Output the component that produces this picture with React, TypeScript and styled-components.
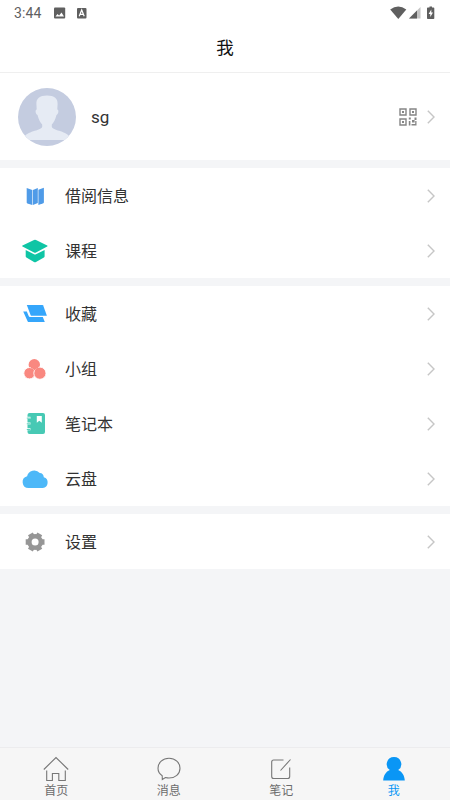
import React from 'react';
import styled, { createGlobalStyle } from 'styled-components';

const GlobalStyle = createGlobalStyle`
  * { box-sizing: border-box; }
  body { margin: 0; background: #f4f5f7; }
`;

const Screen = styled.div`
  width: 450px;
  height: 800px;
  display: flex;
  flex-direction: column;
  overflow: hidden;
  background: #f4f5f7;
  color: #333;
  font-family: Roboto, 'Noto Sans CJK SC', sans-serif;
`;

const StatusBar = styled.div`
  height: 25px;
  flex: none;
  display: flex;
  align-items: center;
  justify-content: space-between;
  padding: 0 13px 0 14px;
  background: #fff;
  color: #5f5f5f;
`;

const StatusLeft = styled.div`
  display: flex;
  align-items: center;
`;

const Clock = styled.span`
  width: 40px;
  font-size: 14px;
  line-height: 25px;
  letter-spacing: 0.1px;
  padding-top: 1px;
`;

const TitleBar = styled.header`
  height: 48px;
  flex: none;
  display: flex;
  align-items: center;
  justify-content: center;
  padding-bottom: 4px;
  background: #fff;
  border-bottom: 1px solid #efefef;
  color: #111;
  font-size: 17.5px;
`;

const Profile = styled.section`
  height: 87px;
  flex: none;
  display: flex;
  align-items: center;
  padding: 0 14px 0 18px;
  background: #fff;
`;

const UserName = styled.span`
  flex: 1;
  padding-left: 15px;
  font-size: 17px;
`;

const Group = styled.section`
  flex: none;
  margin-top: 8px;
  background: #fff;
`;

const Row = styled.div`
  height: 55px;
  display: flex;
  align-items: center;
  padding: 0 14px 0 17px;
`;

const RowLabel = styled.span`
  flex: 1;
  padding: 2px 0 0 12px;
  font-size: 16px;
  line-height: 24px;
`;

const TabBar = styled.nav`
  height: 53px;
  flex: none;
  margin-top: auto;
  display: flex;
  background: #f6f6f6;
  border-top: 1px solid #ececee;
`;

const Tab = styled.div<{ $active?: boolean }>`
  flex: 1;
  display: flex;
  flex-direction: column;
  align-items: center;
  padding-top: 7px;
  font-size: 12px;
  line-height: 14px;
  color: ${(p) => (p.$active ? '#0a96f5' : '#6c6c6c')};
`;

const TabLabel = styled.span`
  margin-top: 2px;
`;

const Chevron = () => (
  <svg width="10" height="16" viewBox="0 0 10 16" fill="none" stroke="#c6c6c6" strokeWidth="1.4">
    <path d="M1.800 1.800 8 8l-6.200 6.200" />
  </svg>
);

const RowSvg = ({ children }: { children: React.ReactNode }) => (
  <svg width="36" height="37" viewBox="0 0 36 37">{children}</svg>
);

const icons = {
  book: (
    <RowSvg>
      <g fill="#4f9be8">
        <path d="M9.700 11 15.300 13v15l-4.900-1.600q-.7-.3-.7-1z" />
        <path d="M15.900 13 20.800 11v15l-4.900 2z" />
        <path d="M21.400 12.800 26.900 10.800v14.400q0 .8-.7 1.100l-4.800 1.700z" />
      </g>
    </RowSvg>
  ),
  course: (
    <RowSvg>
      <g fill="#0fc5a5">
        <path d="M17 8.100q1-.5 2 0l11.200 5.400q.9.500 0 1L19 20.600q-1 .5-2 0L5.500 14.500q-.9-.5 0-1z" />
        <path d="M8.700 18 17 22.200q1 .5 2 0l8.600-4.200v6.200q0 .8-.7 1.200L19 29.900q-1 .5-2 0l-7.600-4.500q-.7-.4-.7-1.200z" />
      </g>
    </RowSvg>
  ),
  collect: (
    <RowSvg>
      <g fill="#35a6fb">
        <path d="M9.800 10h15.700q.5 0 .7.500l3.700 10.300H14.500q-.6 0-.8-.5z" />
        <path d="M6.200 16.500h3.600l2 4.700q.3.800 1.100.8h12.900l2 5H11.700q-.7 0-1-.6z" />
      </g>
    </RowSvg>
  ),
  group: (
    <RowSvg>
      <g fill="#f98880">
        <circle cx="17.300" cy="14.800" r="5.700" />
        <circle cx="12.500" cy="23.200" r="5.700" stroke="#fff" strokeWidth="0.900" />
        <circle cx="22.900" cy="23.200" r="6.100" stroke="#fff" strokeWidth="0.900" />
        <path d="M13 15.500h8.800l-.6 2.500q-2.400.6-3.700 2.600-1.300-1.800-3.500-2.600z" />
      </g>
    </RowSvg>
  ),
  notebook: (
    <RowSvg>
      <path
        fill="#47c9b4"
        d="M12.500 8H26q2 0 2 2v17q0 2-2 2H12.500q-2 0-2-2v-1.800h3v-2h-3v-3.700h3v-2h-3v-3.700h3v-2h-3V10q0-2 2-2z"
      />
      <path d="M9.800 13.100h3.500M9.800 18.800h3.500M9.800 24.500h3.500" stroke="#47c9b4" strokeWidth="0.900" />
      <path d="M19.800 11h5v6.800l-2.500-2-2.500 2z" fill="#fff" />
    </RowSvg>
  ),
  cloud: (
    <RowSvg>
      <path
        d="M11.500 28a6 6 0 0 1-1.400-11.800A7.300 7.300 0 0 1 22.800 13q3.700.2 4 4.300A5.500 5.500 0 0 1 25.800 28z"
        fill="#4db8f8"
      />
    </RowSvg>
  ),
  settings: (
    <RowSvg>
      <g stroke="#969696" strokeWidth="5.600" strokeLinejoin="round">
        <path d="M8.700 19h18.800M13.400 10.900l9.400 16.200M22.800 10.900l-9.400 16.200" />
      </g>
      <circle cx="18.100" cy="19" r="7.900" fill="#969696" />
      <circle cx="18.100" cy="19" r="3.500" fill="#fff" />
    </RowSvg>
  ),
};

const Avatar = () => (
  <svg width="58" height="58" viewBox="0 0 58 58">
    <defs>
      <clipPath id="avatar"><circle cx="29" cy="29" r="29" /></clipPath>
    </defs>
    <g clipPath="url(#avatar)">
      <rect width="58" height="58" fill="#c4cce0" />
      <path
        d="M29 7.500c7.500 0 10.800 3 10.600 8.500L39.300 21.500c1.800.2 1.200 4.700-.8 5.500C37.300 32 35.500 34.500 33.800 36.500v2.200c.7 3.800 13.400 3.800 17.700 9.800L53 52H5l1.500-3.500c4.300-6 17-6 17.700-9.800v-2.200C22.500 34.500 20.700 32 19.500 27c-2-.8-2.600-5.300-.8-5.500L18.400 16C18.200 10.500 21.500 7.500 29 7.500z"
        fill="#e6ebf4"
      />
    </g>
  </svg>
);

const QrCode = styled.svg`
  margin-right: 9px;
`;

const groups: { icon: keyof typeof icons; label: string }[][] = [
  [
    { icon: 'book', label: '借阅信息' },
    { icon: 'course', label: '课程' },
  ],
  [
    { icon: 'collect', label: '收藏' },
    { icon: 'group', label: '小组' },
    { icon: 'notebook', label: '笔记本' },
    { icon: 'cloud', label: '云盘' },
  ],
  [{ icon: 'settings', label: '设置' }],
];

const tabs = [
  { label: '首页', icon: <path d="M1.800 14.500 14 2.500l12.200 12M4.700 15.500V25.500h5.700v-7h6.400v7h6.500v-10" /> },
  {
    label: '消息',
    icon: <path d="M7.200 20.800C4.500 19 3 16.300 3 13.300 3 7.500 7.800 3.300 14 3.300s11 4.200 11 10-4.800 9.700-11 9.700c-1.300 0-2.500-.2-3.600-.5L7.300 24.500z" />,
  },
  {
    label: '笔记',
    icon: <path d="M16.500 5H6.700Q4.700 5 4.700 7v14.500q0 2 2 2h14q2 0 2-2V12.500M13.500 15.500 23.500 4.500" />,
  },
  {
    label: '我',
    icon: (
      <path
        fill="#0a96f5"
        stroke="none"
        d="M14 2a7.200 7.200 0 0 1 4.200 13.100C22 16.700 24.500 20.500 24.800 25.600H3.200C3.500 20.500 6 16.700 9.800 15.100A7.200 7.200 0 0 1 14 2z"
      />
    ),
    active: true,
  },
];

export default function App() {
  return (
    <Screen>
      <GlobalStyle />
      <StatusBar>
        <StatusLeft>
          <Clock>3:44</Clock>
          <svg width="34" height="12" viewBox="0 0 34 12">
            <rect x="0" y="0.500" width="11.200" height="11" rx="1" fill="#5f5f5f" />
            <path d="M1.500 9.500 3.500 7l1.600 1.500L7.500 5.500l2.500 4z" fill="#fff" />
            <rect x="23" y="1" width="9.500" height="10.500" rx="1" fill="#5f5f5f" />
            <path d="m25.200 9.300 2.500-6.300 2.500 6.300M26 7.400h3.500" stroke="#fff" strokeWidth="1.200" fill="none" />
          </svg>
        </StatusLeft>
        <svg width="47" height="14" viewBox="-1 0 47 14" fill="#5f5f5f">
          <path d="M-.8 3.500Q7.200-2.500 15.300 3.500L7.300 13z" />
          <path d="M29.500 1v11.500H18z" fill="#c4c4c4" />
          <path d="M26 4.500v8h-8z" />
          <path d="M38.500.5h2.500v1h1.500q.8 0 .8.800v10q0 .800-.8.800h-5.700q-.8 0-.8-.8v-10q0-.8.800-.8h1.700z" />
          <path d="M40.300 3.500 37.600 8h1.700v3L42 6.500h-1.700z" fill="#fff" />
        </svg>
      </StatusBar>
      <TitleBar>我</TitleBar>
      <Profile>
        <Avatar />
        <UserName>sg</UserName>
        <QrCode width="18" height="18" viewBox="0 0 18 18" fill="none" stroke="#858585" strokeWidth="1.400">
          <path d="M1 1h6v6H1zM11 1h6v6h-6zM1 11h6v6H1z" />
          <path
            d="M3 3h2v2H3zM13 3h2v2h-2zM3 13h2v2H3zM9.800 9.500h2v2h-2zM15.500 9.500h2V12h-2zM13 12h2.600v2.600H13zM9.800 13h1.600v4.500H9.800zM12.500 16h5v1.500h-5zM16.200 13h1.300v4h-1.300z"
            fill="#858585"
            stroke="none"
          />
        </QrCode>
        <Chevron />
      </Profile>
      {groups.map((rows) => (
        <Group key={rows[0].label}>
          {rows.map((row) => (
            <Row key={row.label}>
              {icons[row.icon]}
              <RowLabel>{row.label}</RowLabel>
              <Chevron />
            </Row>
          ))}
        </Group>
      ))}
      <TabBar>
        {tabs.map((tab) => (
          <Tab key={tab.label} $active={tab.active}>
            <svg width="28" height="27" viewBox="0 0 28 27" fill="none" stroke="#777" strokeWidth="1.100">
              {tab.icon}
            </svg>
            <TabLabel>{tab.label}</TabLabel>
          </Tab>
        ))}
      </TabBar>
    </Screen>
  );
}
